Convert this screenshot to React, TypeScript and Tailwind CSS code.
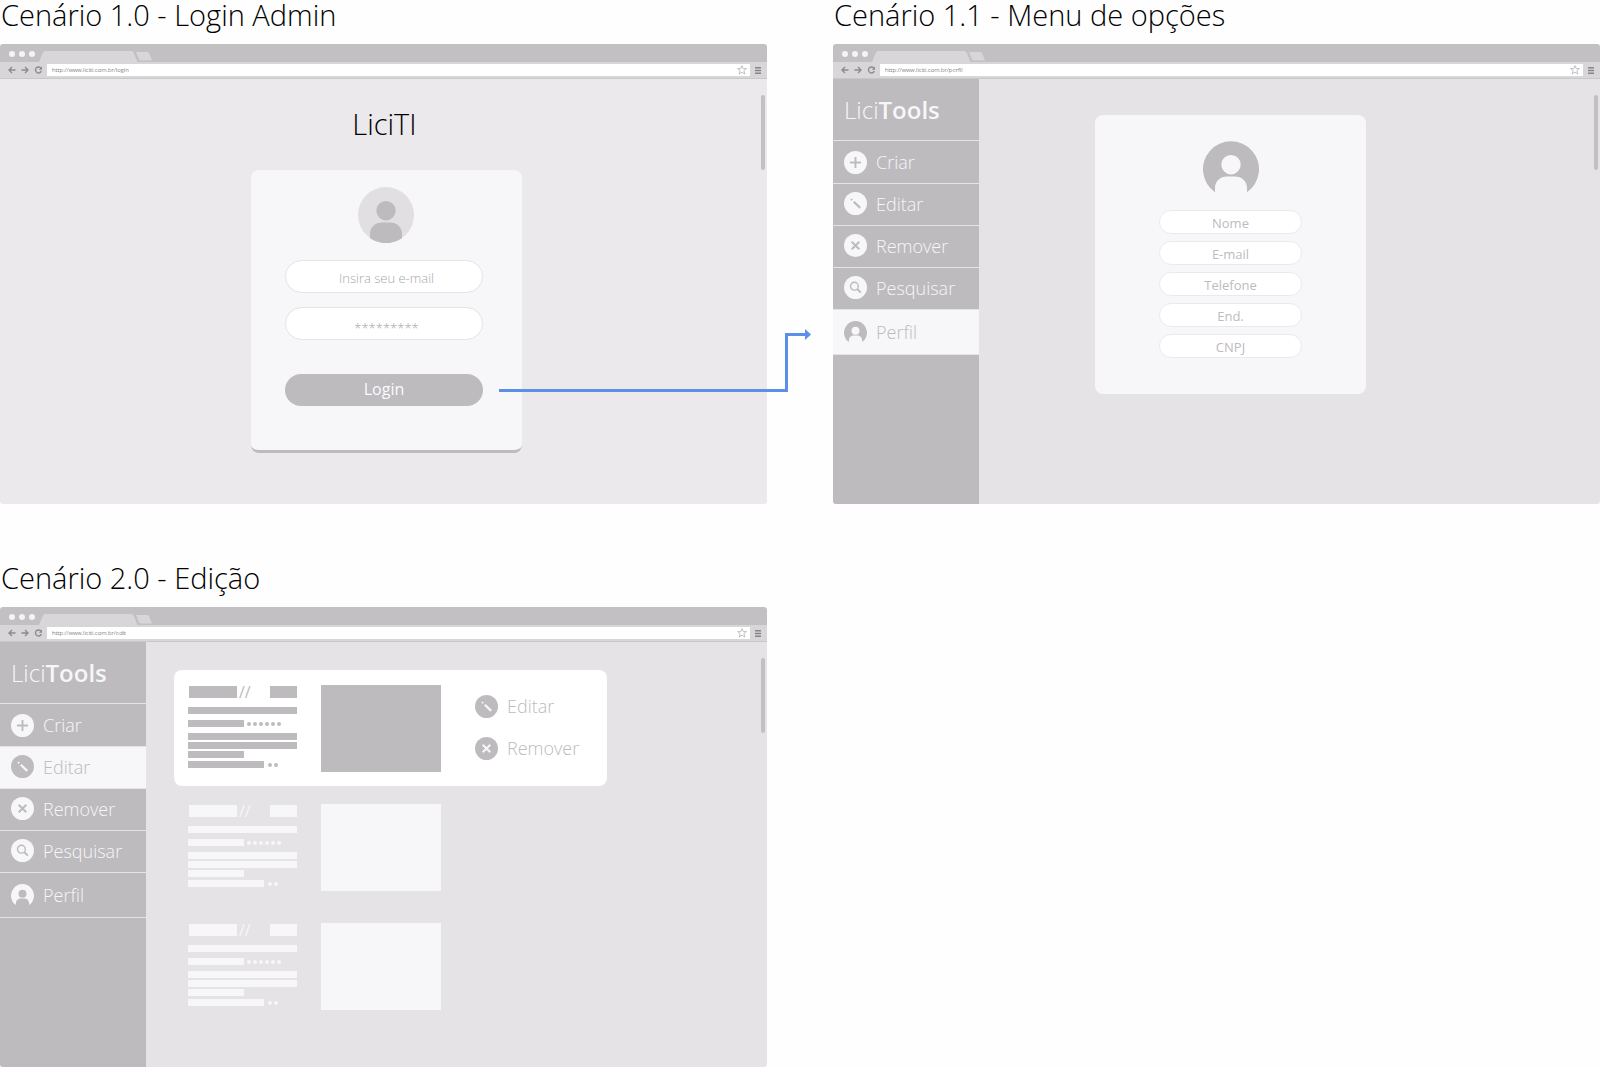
import type { ReactNode } from "react";

type IconName = "plus" | "pencil" | "cross" | "search" | "person";

const DISC = "M11.5 0a11.5 11.5 0 1 0 0 23a11.5 11.5 0 1 0 0-23z";

function Glyph({ name, tone }: { name: IconName; tone: "light" | "dark" }) {
  const disc = tone === "light" ? "#f7f6f9" : "#bdbbbe";
  const mark = tone === "light" ? "#bdbbbe" : "#f7f6f9";
  if (name === "person") {
    return (
      <svg viewBox="0 0 56 56" className="size-[23px] shrink-0" aria-hidden="true">
        <PersonCutout color={disc} />
      </svg>
    );
  }
  return (
    <svg viewBox="0 0 23 23" className="size-[23px] shrink-0" fill="none" stroke={mark} aria-hidden="true">
      <path d={DISC} fill={disc} stroke="none" />
      {name === "plus" && <path d="M11.5 6v11M6 11.5h11" strokeWidth="1.9" />}
      {name === "cross" && <path d="M7.7 7.7l7.6 7.6M15.3 7.7l-7.6 7.6" strokeWidth="2" />}
      {name === "search" && (
        <>
          <circle cx="10.4" cy="10.2" r="3.9" strokeWidth="1.4" />
          <path d="M13.2 13l3.6 3.6" strokeWidth="1.9" />
        </>
      )}
      {name === "pencil" && (
        <>
          <path d="M9.800 9.700l6.400 6.200" strokeWidth="2.2" />
          <path d="M6.400 6.600l2.700.7l-1.900 1.800z" fill={mark} stroke="none" />
        </>
      )}
    </svg>
  );
}

function PersonCutout({ color }: { color: string }) {
  return (
    <path
      fill={color}
      fillRule="evenodd"
      d="M12 51.2A28 28 0 1 1 44 51.2V47C44 40 38.500 35.500 32 35.500H24C17.500 35.500 12 40 12 47zM28 14a9.700 9.700 0 1 0 0 19.400a9.700 9.700 0 1 0 0-19.400z"
    />
  );
}

function Chrome({ url }: { url: string }) {
  return (
    <header>
      <div className="flex h-[18px] items-end bg-[#c2c0c3] pl-[9px]">
        <div className="flex gap-1 pb-[5px]">
          <span className="size-1.5 rounded-full bg-[#f4f3f5]" />
          <span className="size-1.5 rounded-full bg-[#f4f3f5]" />
          <span className="size-1.5 rounded-full bg-[#f4f3f5]" />
        </div>
        <svg viewBox="0 0 114 11" className="ml-1 h-[11px] w-[114px]" fill="#d8d6d8" aria-hidden="true">
          <path d="M0 11L4 1.500Q4.600 0 6 0H92.500Q94 0 94.600 1.500L98.500 11z" />
          <path d="M97 1h11.500q1 0 1.500 1l3 7.500h-11q-1.500 0-2-1.200z" />
        </svg>
      </div>
      <div className="flex h-[17px] items-center border-b border-[#c9c7ca] bg-[#d8d6d8] pr-1.5 pl-2">
        <svg viewBox="0 0 35 8" className="h-2 w-[35px]" fill="none" stroke="#8d8b8e" strokeWidth="1.4" aria-hidden="true">
          <path d="M7.500 4H1M4 1L1 4l3 3" />
          <path d="M13.500 4H20M17 1l3 3l-3 3" />
          <path d="M33 2.300A3 3 0 1 0 33.300 5" />
          <path d="M34 .5v3.200h-3.200z" fill="#8d8b8e" stroke="none" />
        </svg>
        <div className="ml-1 flex h-3 flex-1 items-center justify-between bg-white pr-[3px] pl-[5px]">
          <span className="text-[6px] leading-3 font-light text-[#333]">{url}</span>
          <svg viewBox="0 0 10 10" className="size-2.5" fill="none" stroke="#a9a7aa" strokeWidth=".7" aria-hidden="true">
            <path d="M5 .6l1.200 3h3.200L6.900 5.600l1 3.500L5 7.200L2.100 9.100l1-3.500L.6 3.600h3.200z" />
          </svg>
        </div>
        <svg viewBox="0 0 6 7" className="ml-[5px] h-[7px] w-1.5" fill="#868487" aria-hidden="true">
          <path d="M0 0h6v1.500H0zM0 2.700h6v1.500H0zM0 5.400h6v1.500H0z" />
        </svg>
      </div>
    </header>
  );
}

function Scenario({ title, url, tone, children, overlay }: { title: string; url: string; tone: string; children: ReactNode; overlay?: ReactNode }) {
  return (
    <section className="relative">
      <h2 className="h-11 pl-px text-[29px] leading-[30px] font-light text-black">{title}</h2>
      <div className="overflow-hidden rounded-[3px]">
        <Chrome url={url} />
        <div className={`relative flex min-h-[425px] ${tone}`}>
          {children}
          <span className="absolute top-4 right-0.5 h-[75px] w-1 rounded-sm bg-[#c2c0c3]" />
        </div>
      </div>
      {overlay}
    </section>
  );
}

const MENU: { label: string; icon: IconName; box: string }[] = [
  { label: "Criar", icon: "plus", box: "h-[43px]" },
  { label: "Editar", icon: "pencil", box: "h-[42px] pb-0.5" },
  { label: "Remover", icon: "cross", box: "h-[42px] pb-0.5" },
  { label: "Pesquisar", icon: "search", box: "h-[42px] pb-0.5" },
  { label: "Perfil", icon: "person", box: "h-[45px]" },
];

function Sidebar({ active }: { active: string }) {
  return (
    <nav className="w-[146px] shrink-0 bg-[#bdbbbe]">
      <div className="flex h-[62px] items-center border-b border-[#e5e3e6] pl-[11px] text-2xl font-light text-[#f7f6f9]">
        <span>
          Lici<span className="font-semibold">Tools</span>
        </span>
      </div>
      <ul>
        {MENU.map((m) => (
          <li key={m.label}>
            <a
              href="#"
              className={`flex items-center gap-[9px] border-b border-[#e5e3e6] pl-[11px] text-lg font-light ${m.box} ${
                m.label === active ? "bg-[#f7f6f9] text-[#bdbbbe]" : "text-[#f7f6f9]"
              }`}
            >
              <Glyph name={m.icon} tone={m.label === active ? "dark" : "light"} />
              {m.label}
            </a>
          </li>
        ))}
      </ul>
    </nav>
  );
}

const LOGIN_FIELD =
  "block h-[33px] w-full rounded-full border border-[#e5e3e6] bg-white pl-[5px] text-center text-[13px] font-light text-[#a9a7aa] placeholder:text-[#a9a7aa]";

function LoginScreen() {
  return (
    <main className="flex flex-1 flex-col items-center pt-[30px] pl-1.5">
      <h1 className="mr-1 text-[29px] leading-[30px] font-light text-black">LiciTI</h1>
      <form className="mt-[31px] h-[283px] w-[271px] rounded-lg border-b-[3px] border-[#bdbbbe] bg-[#f7f6f9] pt-[17px] pr-[39px] pl-[34px]">
        <svg viewBox="0 0 56 56" className="mx-auto size-14 translate-x-0.5" aria-label="Usuário" role="img">
          <circle cx="28" cy="28" r="28" fill="#e1dfe2" />
          <circle cx="28" cy="23.700" r="9.700" fill="#bdbbbe" />
          <path d="M12 51.200V47C12 40 17.500 35.500 24 35.500H32C38.500 35.500 44 40 44 47V51.200A28 28 0 0 1 12 51.200z" fill="#bdbbbe" />
        </svg>
        <input type="email" aria-label="E-mail" placeholder="Insira seu e-mail" className={`mt-[17px] pt-0.5 ${LOGIN_FIELD}`} />
        <input type="password" aria-label="Senha" placeholder="*********" className={`mt-[14px] pt-2 ${LOGIN_FIELD}`} />
        <button type="button" className="mt-[34px] block h-8 w-full rounded-full bg-[#bdbbbe] pb-0.5 text-base leading-[30px] text-[#fbfafc]">
          Login
        </button>
      </form>
    </main>
  );
}

function ProfileScreen() {
  return (
    <>
      <Sidebar active="Perfil" />
      <main className="flex-1 pt-9 pl-[116px]">
        <form className="flex h-[279px] w-[271px] flex-col items-center gap-[7px] rounded-lg bg-[#f7f6f9] pt-[26px]">
          <svg viewBox="0 0 56 56" className="mb-1.5 size-14" aria-label="Perfil" role="img">
            <PersonCutout color="#bdbbbe" />
          </svg>
          {["Nome", "E-mail", "Telefone", "End.", "CNPJ"].map((f) => (
            <input
              key={f}
              type="text"
              aria-label={f}
              placeholder={f}
              className="h-6 w-[143px] shrink-0 rounded-full border border-[#ebe9ec] bg-white pt-0.5 text-center text-[13px] text-[#bdbbbe] placeholder:text-[#bdbbbe]"
            />
          ))}
        </form>
      </main>
    </>
  );
}

function Dots({ count }: { count: number }) {
  return (
    <span className="flex gap-0.5">
      {Array.from({ length: count }, (_, i) => (
        <span key={i} className="size-1 rounded-full bg-current" />
      ))}
    </span>
  );
}

function Listing({ selected = false }: { selected?: boolean }) {
  return (
    <li className={`flex h-[116px] w-[433px] rounded-lg pt-[15px] pl-3.5 ${selected ? "bg-white text-[#bdbbbe]" : "text-[#f7f6f9]"}`}>
      <div className="w-[109px]">
        <div className="flex h-3.5 items-center pl-px">
          <span className="h-3 w-12 bg-current" />
          <span className="pl-0.5 text-base leading-3">//</span>
          <span className="ml-auto h-3 w-[27px] shrink-0 bg-current" />
        </div>
        <div className="mt-2 h-[7px] bg-current" />
        <div className="mt-1.5 flex h-[7px] items-center gap-[3px]">
          <span className="h-[7px] w-14 bg-current" />
          <Dots count={6} />
        </div>
        <div className="mt-1.5 h-[7px] bg-current" />
        <div className="mt-0.5 h-[7px] bg-current" />
        <div className="mt-0.5 h-[7px] w-14 bg-current" />
        <div className="mt-[3px] flex h-[7px] items-center gap-1">
          <span className="h-[7px] w-[76px] bg-current" />
          <Dots count={2} />
        </div>
      </div>
      <div className="ml-6 h-[87px] w-[120px] bg-current" />
      {selected && (
        <div className="ml-[34px] flex flex-col items-start gap-[15px] pt-2 text-lg leading-[27px] font-light">
          <button type="button" className="flex items-center gap-[9px]">
            <Glyph name="pencil" tone="dark" />
            Editar
          </button>
          <button type="button" className="flex items-center gap-[9px]">
            <Glyph name="cross" tone="dark" />
            Remover
          </button>
        </div>
      )}
    </li>
  );
}

function EditScreen() {
  return (
    <>
      <Sidebar active="Editar" />
      <main className="flex-1 pt-7 pl-7">
        <ul className="flex flex-col gap-[3px]">
          <Listing selected />
          <Listing />
          <Listing />
        </ul>
      </main>
    </>
  );
}

function FlowArrow() {
  return (
    <svg viewBox="0 0 312 66" className="pointer-events-none absolute top-[328px] -right-11 h-[66px] w-[312px]" aria-hidden="true">
      <path d="M0 62.500H287.500V6.500H307" fill="none" stroke="#5b8fe8" strokeWidth="3" />
      <path d="M306 1l6 5.500l-6 5.500z" fill="#5b8fe8" />
    </svg>
  );
}

export default function App() {
  return (
    <div className="grid min-h-screen grid-cols-2 content-start gap-x-[66px] gap-y-[59px] bg-[#fefefe] font-['Open_Sans',sans-serif]">
      <Scenario title="Cenário 1.0 - Login Admin" url="http://www.liciti.com.br/login" tone="bg-[#ebe9ec]" overlay={<FlowArrow />}>
        <LoginScreen />
      </Scenario>
      <Scenario title="Cenário 1.1 - Menu de opções" url="http://www.liciti.com.br/perfil" tone="bg-[#e5e3e6]">
        <ProfileScreen />
      </Scenario>
      <Scenario title="Cenário 2.0 - Edição" url="http://www.liciti.com.br/edit" tone="bg-[#e5e3e6]">
        <EditScreen />
      </Scenario>
    </div>
  );
}
